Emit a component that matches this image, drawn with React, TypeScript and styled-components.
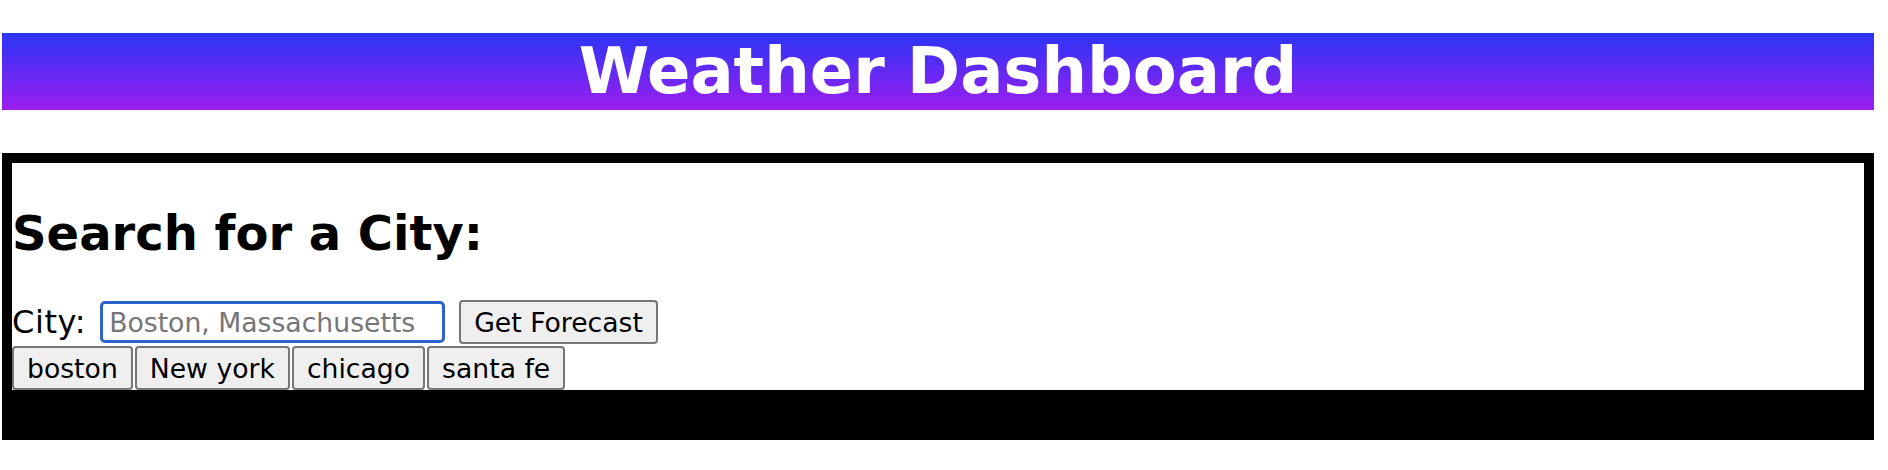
import React from "react";
import styled, { createGlobalStyle } from "styled-components";

const GlobalStyle = createGlobalStyle`
  html, body {
    margin: 0;
    padding: 0;
    background: #ffffff;
  }
  body {
    font-family: "DejaVu Sans", Verdana, sans-serif;
    color: #000000;
  }
`;

const Page = styled.div`
  width: 1872px;
  padding: 33px 14px 0 2px;
`;

const Header = styled.header`
  height: 77px;
  background: linear-gradient(to bottom, #2a35f6, #9c1ef0);
  display: flex;
  align-items: center;
  justify-content: center;
`;

const Title = styled.h1`
  margin: 0;
  font-size: 64px;
  line-height: 77px;
  font-weight: 700;
  color: #ffffff;
`;

const Panel = styled.main`
  margin-top: 43px;
  border: 10px solid #000000;
  background: #000000;
`;

const SearchSection = styled.section`
  background: #ffffff;
  display: flex;
  flex-direction: column;
`;

const SectionTitle = styled.h2`
  margin: 42px 0 39px 0;
  font-size: 48px;
  line-height: 56px;
  font-weight: 700;
`;

const FormRow = styled.form`
  display: flex;
  align-items: center;
  gap: 14px;
  margin: 0;
`;

const Label = styled.label`
  font-size: 32px;
  line-height: 37px;
  letter-spacing: 0.6px;
  margin-right: 0;
`;

const CityInput = styled.input`
  box-sizing: border-box;
  width: 345px;
  height: 42px;
  padding: 0 6px;
  border: 3px solid #2c62cc;
  border-radius: 5px;
  font-family: "DejaVu Sans", Verdana, sans-serif;
  font-size: 26.67px;
  color: #000000;
  outline: none;
  &::placeholder {
    color: #767676;
  }
`;

const Button = styled.button`
  box-sizing: border-box;
  height: 44px;
  padding: 0 13px;
  background: #efefef;
  border: 2px solid #767676;
  border-radius: 4px;
  font-family: "DejaVu Sans", Verdana, sans-serif;
  font-size: 26.67px;
  color: #000000;
  cursor: pointer;
`;

const HistoryRow = styled.div`
  display: flex;
  gap: 2px;
  margin-top: 2px;
`;

const ForecastArea = styled.section`
  height: 40px;
  background: #000000;
`;

const cities = ["boston", "New york", "chicago", "santa fe"];

export default function App() {
  return (
    <>
      <GlobalStyle />
      <Page>
        <Header>
          <Title>Weather Dashboard</Title>
        </Header>
        <Panel>
          <SearchSection>
            <SectionTitle>Search for a City:</SectionTitle>
            <FormRow onSubmit={(e) => e.preventDefault()}>
              <Label htmlFor="city">City:</Label>
              <CityInput id="city" placeholder="Boston, Massachusetts" />
              <Button type="submit">Get Forecast</Button>
            </FormRow>
            <HistoryRow>
              {cities.map((c) => (
                <Button key={c} type="button">
                  {c}
                </Button>
              ))}
            </HistoryRow>
          </SearchSection>
          <ForecastArea />
        </Panel>
      </Page>
    </>
  );
}
